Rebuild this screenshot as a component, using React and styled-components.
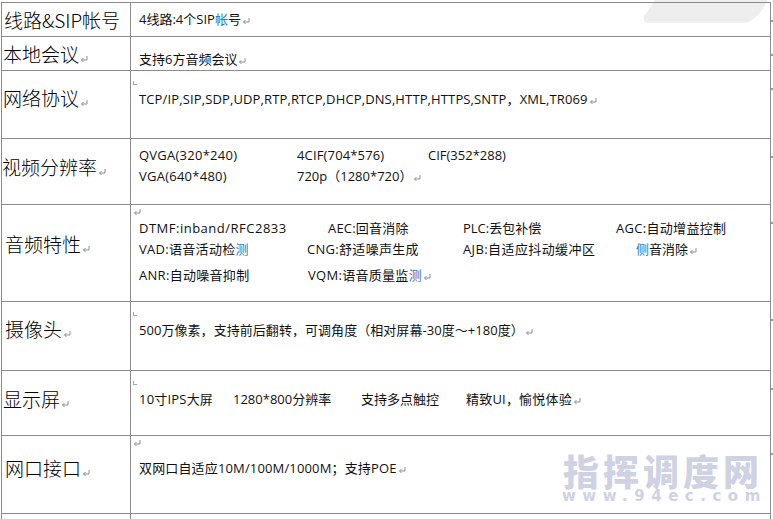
import React from 'react';
import styled, { createGlobalStyle } from 'styled-components';

const GlobalStyle = createGlobalStyle`
  html, body {
    margin: 0;
    background: #fff;
    overflow: hidden;
  }
  body {
    font-family: "Open Sans", "Noto Sans CJK SC", sans-serif;
    color: #111;
  }
`;

const Page = styled.div`
  position: relative;
  width: 773px;
  height: 519px;
  overflow: hidden;
  padding: 2px 0 0 1px;
  box-sizing: border-box;
`;

const Table = styled.div`
  position: relative;
  width: 770px;
  border-top: 1px solid #8c8c8c;
`;

const Row = styled.div`
  position: relative;
  display: grid;
  grid-template-columns: 129px 1fr;
  height: ${(p) => p.$height}px;
  box-sizing: border-box;
  border-bottom: 1px solid #8c8c8c;
  border-left: 1px solid #8c8c8c;
  border-right: 1px solid #8c8c8c;

  &::after {
    content: '';
    position: absolute;
    right: -3px;
    top: 17px;
    width: 2px;
    height: 2px;
    background: #9a9a9a;
  }
`;

const Label = styled.div`
  border-right: 1px solid #8c8c8c;
  padding: ${(p) => p.$top}px 0 0 ${(p) => p.$left}px;
  font-family: "Noto Sans CJK SC", sans-serif;
  font-size: 19px;
  font-weight: 300;
  line-height: 20px;
  color: #000;
  white-space: nowrap;
`;

const Cell = styled.div`
  position: relative;
  padding: ${(p) => p.$top}px 0 0 8px;
  font-size: 13px;
  line-height: 16px;
  white-space: nowrap;
`;

const Line = styled.div`
  display: flex;
  margin-top: ${(p) => p.$gap || 0}px;
`;

const Col = styled.span`
  flex: none;
  width: ${(p) => (p.$width ? `${p.$width}px` : 'auto')};
  letter-spacing: ${(p) => p.$track || 0}px;
`;

const Blue = styled.span`
  color: #2b78c2;
`;

const Corner = styled.span`
  position: absolute;
  left: 1px;
  top: 3px;
  line-height: 0;
`;

const Tick = styled.span`
  position: absolute;
  left: 2px;
  top: 10px;
  width: 3px;
  height: 3px;
  border-left: 1px solid #a5a5a5;
  border-bottom: 1px solid #a5a5a5;
`;

const Mark = styled.svg`
  display: inline-block;
  width: 8px;
  height: 8px;
  margin-left: 1px;
  vertical-align: -1px;
`;

const Watermark = styled.div`
  position: absolute;
  left: 562px;
  top: 450px;
  width: 202px;
  text-align: center;
  color: #cfd2e3;
  pointer-events: none;
`;

const WatermarkTitle = styled.div`
  font-family: "Noto Sans CJK SC", sans-serif;
  font-size: 36px;
  font-weight: 900;
  line-height: 40px;
  letter-spacing: 4px;
  white-space: nowrap;
`;

const WatermarkUrl = styled.div`
  font-family: "DejaVu Sans", sans-serif;
  font-size: 15px;
  font-weight: 700;
  line-height: 12px;
  letter-spacing: 6.5px;
  white-space: nowrap;
`;

const Tab = styled.svg`
  position: absolute;
  left: 643px;
  top: 0;
  width: 126px;
  height: 24px;
`;

const ReturnMark = () => (
  <Mark viewBox="0 0 8 8" fill="none" stroke="#8f8f8f" strokeWidth="1">
    <path d="M7 1v4H1.5M3.5 3 1.5 5l2 2" />
  </Mark>
);

const rows = [
  {
    height: 34, label: '线路&SIP帐号', left: 2, labelTop: 7, top: 8,
    lines: [{ cols: [{ text: <>4线路:4个SIP<Blue>帐</Blue>号<ReturnMark /></> }] }],
  },
  {
    height: 34, label: '本地会议', left: 1, labelTop: 7, top: 14, labelMark: true,
    lines: [{ cols: [{ text: <>支持6方音频会议<ReturnMark /></> }] }],
  },
  {
    height: 68, label: '网络协议', left: 1, labelTop: 17, top: 20, labelMark: true, tick: true,
    lines: [{ cols: [{ track: 0.13, text: <>TCP/IP,SIP,SDP,UDP,RTP,RTCP,DHCP,DNS,HTTP,HTTPS,SNTP，XML,TR069<ReturnMark /></> }] }],
  },
  {
    height: 66, label: '视频分辨率', left: 0, labelTop: 18, top: 8, labelMark: true,
    lines: [
      { cols: [{ width: 158, track: 0.25, text: 'QVGA(320*240)' }, { width: 131, track: 0.15, text: '4CIF(704*576)' }, { text: 'CIF(352*288)' }] },
      { gap: 5, cols: [{ width: 158, track: 0.25, text: 'VGA(640*480)' }, { text: <>720p（1280*720）<ReturnMark /></> }] },
    ],
  },
  {
    height: 97, label: '音频特性', left: 3, labelTop: 29, top: 15, labelMark: true, corner: true,
    lines: [
      { cols: [{ width: 189, track: 0.5, text: 'DTMF:inband/RFC2833' }, { width: 135, track: 0.2, text: 'AEC:回音消除' }, { width: 153, text: 'PLC:丢包补偿' }, { track: 0.3, text: 'AGC:自动增益控制' }] },
      { gap: 5, cols: [{ width: 168, track: 0.3, text: <>VAD:语音活动检<Blue>测</Blue></> }, { width: 156, track: 0.3, text: 'CNG:舒适噪声生成' }, { width: 173, track: 0.4, text: 'AJB:自适应抖动缓冲区' }, { text: <><Blue>侧</Blue>音消除<ReturnMark /></> }] },
      { gap: 10, cols: [{ width: 169, track: 0.3, text: 'ANR:自动噪音抑制' }, { track: 0.3, text: <>VQM:语音质量监<Blue>测</Blue><ReturnMark /></> }] },
    ],
  },
  {
    height: 69, label: '摄像头', left: 3, labelTop: 17, top: 20, labelMark: true, tick: true,
    lines: [{ cols: [{ track: 0.05, text: <>500万像素，支持前后翻转，可调角度（相对屏幕-30度～+180度）<ReturnMark /></> }] }],
  },
  {
    height: 65, label: '显示屏', left: 1, labelTop: 18, top: 20, labelMark: true, tick: true,
    lines: [{ cols: [{ width: 94, track: 0.2, text: '10寸IPS大屏' }, { width: 128, text: '1280*800分辨率' }, { width: 105, text: '支持多点触控' }, { track: 0.2, text: <>精致UI，愉悦体验<ReturnMark /></> }] }],
  },
  {
    height: 78, label: '网口接口', left: 3, labelTop: 22, top: 24, labelMark: true, corner: true,
    lines: [{ cols: [{ track: 0.15, text: <>双网口自适应10M/100M/1000M；支持POE<ReturnMark /></> }] }],
  },
  { height: 20, label: '', left: 0, labelTop: 0, top: 0, lines: [] },
];

const App = () => (
  <>
    <GlobalStyle />
    <Page>
      <Tab viewBox="0 0 126 24">
        <path d="M12 0h113c-5 9-12 22-26 23H6C0 23-1 19 2 15z" fill="#eeeeee" />
      </Tab>
      <Table>
        {rows.map((row, i) => (
          <Row key={i} $height={row.height}>
            <Label $top={row.labelTop} $left={row.left}>
              {row.label}
              {row.labelMark && <ReturnMark />}
            </Label>
            <Cell $top={row.top}>
              {row.corner && (
                <Corner>
                  <ReturnMark />
                </Corner>
              )}
              {row.tick && <Tick />}
              {row.lines.map((line, j) => (
                <Line key={j} $gap={line.gap}>
                  {line.cols.map((col, k) => (
                    <Col key={k} $width={col.width} $track={col.track}>
                      {col.text}
                    </Col>
                  ))}
                </Line>
              ))}
            </Cell>
          </Row>
        ))}
      </Table>
      <Watermark>
        <WatermarkTitle>指挥调度网</WatermarkTitle>
        <WatermarkUrl>www.94ec.com</WatermarkUrl>
      </Watermark>
    </Page>
  </>
);

export default App;
